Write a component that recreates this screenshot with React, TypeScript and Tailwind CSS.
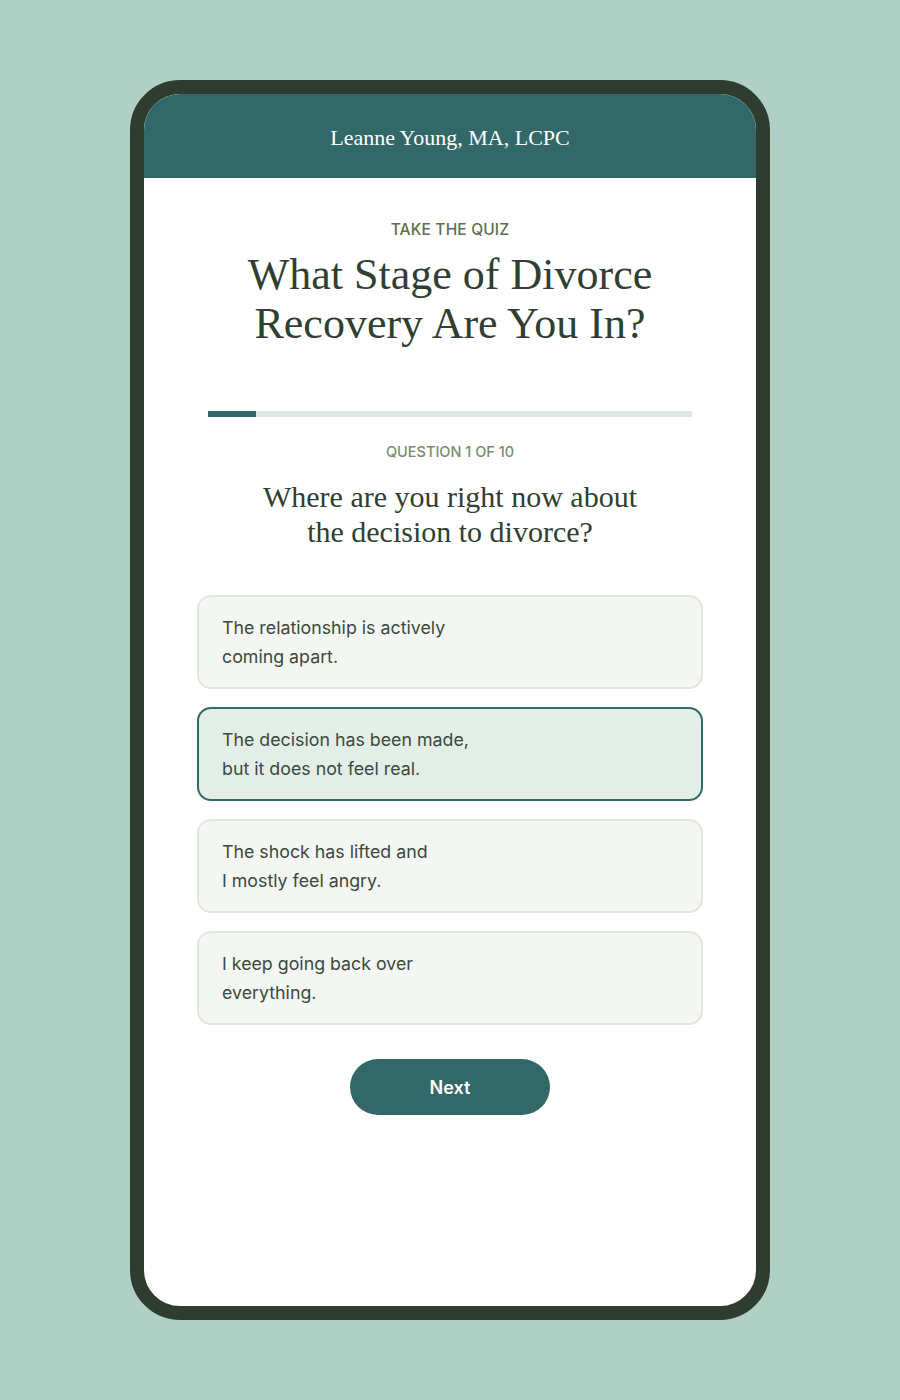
import { useState } from 'react'

const OPTIONS = [
  ['The relationship is actively', 'coming apart.'],
  ['The decision has been made,', 'but it does not feel real.'],
  ['The shock has lifted and', 'I mostly feel angry.'],
  ['I keep going back over', 'everything.'],
]

export default function App() {
  const [selected, setSelected] = useState(1)

  return (
    <div className="min-h-[1400px] bg-[#b0d0c5] pt-[80px] font-['Inter',sans-serif]">
      <div className="mx-auto h-[1240px] w-[640px] overflow-hidden rounded-[50px] border-[14px] border-[#2e3d30] bg-white">
        {/* Header */}
        <div className="flex h-[84px] items-center justify-center bg-[#336868] pt-[2px]">
          <span className="font-['Liberation_Serif',serif] text-[22px] text-white">
            Leanne Young, MA, LCPC
          </span>
        </div>

        <div className="px-[53px] pt-[42px] text-center">
          <div className="text-[15.5px] leading-5 font-medium tracking-[0.01em] text-[#5e6e4f]">
            TAKE THE QUIZ
          </div>
          <h1 className="mt-[10px] font-['Liberation_Serif',serif] text-[44px] leading-[49px] text-[#2f3f31]">
            What Stage of Divorce
            <br />
            Recovery Are You In?
          </h1>

          {/* Progress */}
          <div className="mx-[11px] mt-[63px] h-[6px] bg-[#dde7e3]">
            <div className="h-full w-[10%] bg-[#336868]" />
          </div>

          <div className="mt-[25px] text-[14.5px] leading-5 font-medium text-[#7b8c6d]">
            QUESTION 1 OF 10
          </div>
          <h2 className="mt-[17px] font-['Liberation_Serif',serif] text-[30px] leading-[35px] text-[#2f3f31]">
            Where are you right now about
            <br />
            the decision to divorce?
          </h2>

          <div className="mt-[46px] flex flex-col gap-[18px] text-left">
            {OPTIONS.map((lines, i) => (
              <button
                key={i}
                onClick={() => setSelected(i)}
                className={
                  i === selected
                    ? 'rounded-[14px] border-2 border-[#336868] bg-[#e3eee8] px-[23px] py-4 text-left text-[17.8px] leading-[29px] text-[#3a4a3c]'
                    : 'rounded-[14px] border-2 border-[#e3e6e0] bg-[#f4f6f3] px-[23px] py-4 text-left text-[17.8px] leading-[29px] text-[#3a4a3c]'
                }
              >
                {lines[0]}
                <br />
                {lines[1]}
              </button>
            ))}
          </div>

          <button className="mt-[34px] h-[56px] w-[200px] rounded-full bg-[#336868] text-[18px] font-semibold text-white">
            Next
          </button>
        </div>
      </div>
    </div>
  )
}
